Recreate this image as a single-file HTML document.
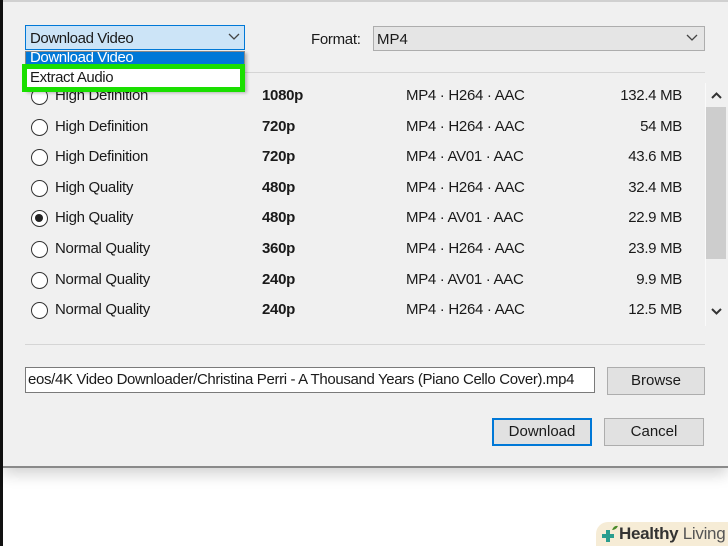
<!DOCTYPE html>
<html><head><style>
*{margin:0;padding:0;box-sizing:border-box}
body{width:728px;height:546px;background:#fff;position:relative;overflow:hidden;font-family:"Liberation Sans",sans-serif;font-size:15px;color:#1a1a1a}
.a{position:absolute}
.dlg{left:3px;top:0;width:725px;height:468px;background:#f0f0f0;border-bottom:2px solid #8a8a8a;box-shadow:0 6px 14px rgba(0,0,0,.18);border-top:2px solid #d0d0d0}
.row{position:absolute;left:0;width:700px;height:30px}
.row span{position:absolute;top:0;white-space:nowrap;letter-spacing:-0.3px}
.rad{position:absolute;left:31px;top:-8px;width:17px;height:17px;border:1.5px solid #333;border-radius:50%;background:#fff}
.rad.on::after{content:"";position:absolute;left:3px;top:3px;width:8px;height:8px;border-radius:50%;background:#222}
.btn{position:absolute;background:#e1e1e1;border:1px solid #adadad;text-align:center;line-height:26px;font-size:15px}
</style></head><body>
<div class="a" style="left:0;top:0;width:3px;height:546px;background:#111"></div>
<div class="a dlg"></div>
<div class="a" style="left:25px;top:25px;width:220px;height:25px;background:#cce4f7;border:1px solid #0078d7"></div>
<div class="a" style="left:30px;top:30px;letter-spacing:-0.4px">Download Video</div>
<svg class="a" style="left:228px;top:33px" width="12" height="8"><path d="M1 1 L6 6 L11 1" stroke="#444" stroke-width="1.3" fill="none"/></svg>
<div class="a" style="left:311px;top:31px;letter-spacing:-0.3px">Format:</div>
<div class="a" style="left:373px;top:26px;width:332px;height:25px;background:#e5e5e5;border:1px solid #adadad"></div>
<div class="a" style="left:377px;top:31px">MP4</div>
<svg class="a" style="left:686px;top:34px" width="12" height="8"><path d="M1 1 L6 6 L11 1" stroke="#444" stroke-width="1.3" fill="none"/></svg>
<div class="a" style="left:245px;top:72px;width:460px;height:1px;background:#d5d5d5"></div>
<div class="a" style="left:0;top:0">
<div class="row" style="top:96px"><div class="rad"></div><span style="left:55px;top:-9px">High Definition</span><span style="left:262px;top:-9px;font-weight:bold">1080p</span><span style="left:406px;top:-9px">MP4 · H264 · AAC</span><span style="right:18px;top:-9px">132.4 MB</span></div>
<div class="row" style="top:127px"><div class="rad"></div><span style="left:55px;top:-9px">High Definition</span><span style="left:262px;top:-9px;font-weight:bold">720p</span><span style="left:406px;top:-9px">MP4 · H264 · AAC</span><span style="right:18px;top:-9px">54 MB</span></div>
<div class="row" style="top:157px"><div class="rad"></div><span style="left:55px;top:-9px">High Definition</span><span style="left:262px;top:-9px;font-weight:bold">720p</span><span style="left:406px;top:-9px">MP4 · AV01 · AAC</span><span style="right:18px;top:-9px">43.6 MB</span></div>
<div class="row" style="top:188px"><div class="rad"></div><span style="left:55px;top:-9px">High Quality</span><span style="left:262px;top:-9px;font-weight:bold">480p</span><span style="left:406px;top:-9px">MP4 · H264 · AAC</span><span style="right:18px;top:-9px">32.4 MB</span></div>
<div class="row" style="top:218px"><div class="rad on"></div><span style="left:55px;top:-9px">High Quality</span><span style="left:262px;top:-9px;font-weight:bold">480p</span><span style="left:406px;top:-9px">MP4 · AV01 · AAC</span><span style="right:18px;top:-9px">22.9 MB</span></div>
<div class="row" style="top:249px"><div class="rad"></div><span style="left:55px;top:-9px">Normal Quality</span><span style="left:262px;top:-9px;font-weight:bold">360p</span><span style="left:406px;top:-9px">MP4 · H264 · AAC</span><span style="right:18px;top:-9px">23.9 MB</span></div>
<div class="row" style="top:280px"><div class="rad"></div><span style="left:55px;top:-9px">Normal Quality</span><span style="left:262px;top:-9px;font-weight:bold">240p</span><span style="left:406px;top:-9px">MP4 · AV01 · AAC</span><span style="right:18px;top:-9px">9.9 MB</span></div>
<div class="row" style="top:310px"><div class="rad"></div><span style="left:55px;top:-9px">Normal Quality</span><span style="left:262px;top:-9px;font-weight:bold">240p</span><span style="left:406px;top:-9px">MP4 · H264 · AAC</span><span style="right:18px;top:-9px">12.5 MB</span></div>
</div>
<div class="a" style="left:705px;top:83px;width:22px;height:243px;background:#f0f0f0;border-left:1px solid #fafafa"></div>
<div class="a" style="left:706px;top:107px;width:20px;height:152px;background:#cdcdcd"></div>
<svg class="a" style="left:711px;top:92px" width="11" height="8"><path d="M1 6 L5.5 1.5 L10 6" stroke="#333" stroke-width="2" fill="none"/></svg>
<svg class="a" style="left:711px;top:307px" width="11" height="8"><path d="M1 2 L5.5 6.5 L10 2" stroke="#333" stroke-width="2" fill="none"/></svg>
<div class="a" style="left:25px;top:51px;width:220px;height:40px;background:#fff;border:1px solid #888;box-shadow:2px 2px 3px rgba(0,0,0,.25)"></div>
<div class="a" style="left:26px;top:52px;width:218px;height:13px;background:#0078d7;overflow:hidden"><div style="color:#fff;margin:-3px 0 0 4px;letter-spacing:-0.4px">Download Video</div></div>
<div class="a" style="left:22px;top:64px;width:223px;height:28px;border:5px solid #1adf00;background:#fff"></div>
<div class="a" style="left:30px;top:69px;letter-spacing:-0.4px">Extract Audio</div>
<div class="a" style="left:25px;top:344px;width:680px;height:1px;background:#d5d5d5"></div>
<div class="a" style="left:25px;top:367px;width:570px;height:26px;background:#fff;border:1px solid #7a7a7a;overflow:hidden;white-space:nowrap;line-height:24px;letter-spacing:-0.35px;padding-left:2px;direction:rtl;text-align:left"><span style="direction:ltr;unicode-bidi:bidi-override">eos/4K Video Downloader/Christina Perri - A Thousand Years (Piano Cello Cover).mp4</span></div>
<div class="btn" style="left:607px;top:367px;width:98px;height:28px">Browse</div>
<div class="btn" style="left:492px;top:418px;width:100px;height:28px;border:2px solid #0078d7;line-height:24px">Download</div>
<div class="btn" style="left:604px;top:418px;width:100px;height:28px">Cancel</div>
<div class="a" style="left:596px;top:522px;width:132px;height:24px;background:#f6ecd6;border-radius:12px 0 0 0"></div>
<svg class="a" style="left:598px;top:524px" width="22" height="20"><path d="M4 12 H16 M10 6 V18" stroke="#2a9d8f" stroke-width="4"/><path d="M14 6 Q16 1 20 2 Q18 6 14 6Z" fill="#4a8a2a"/></svg>
<div class="a" style="left:619px;top:524px;font-size:17px;font-weight:bold;color:#333;letter-spacing:-0.3px">Healthy <span style="font-weight:normal;color:#555">Living</span></div>
</body></html>
